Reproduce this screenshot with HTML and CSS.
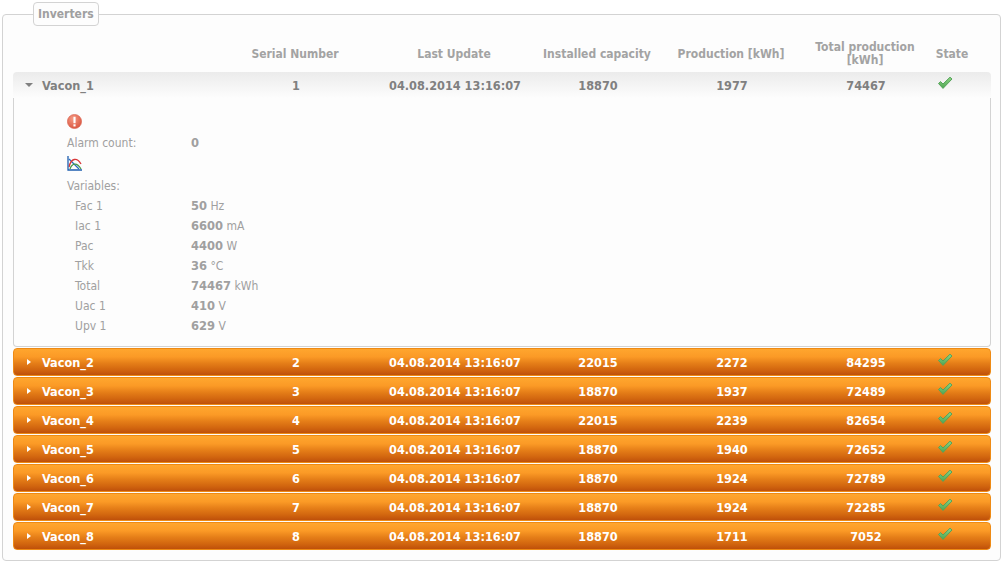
FILE: index.html
```html
<!DOCTYPE html>
<html lang="en">
<head>
<meta charset="utf-8">
<title>Inverters</title>
<link rel="stylesheet" href="styles.css">
</head>
<body>
<svg class="defs" width="0" height="0" aria-hidden="true">
  <defs>
    <linearGradient id="chk" x1="0" y1="0" x2="0" y2="1"><stop offset="0" stop-color="#8fd584"/><stop offset="1" stop-color="#4ea552"/></linearGradient>
    <symbol id="check" viewBox="0 0 16 14"><path d="M1.5 7.5 L3.6 5.6 L6 8 L13 1.2 L15 3 L6 12.4 Z" fill="url(#chk)" stroke="#55a35a" stroke-width="1"/></symbol>
  </defs>
</svg>
<fieldset class="panel">
  <legend class="panel-title">Inverters</legend>
  <div class="grid head">
    <span></span><span>Serial Number</span><span>Last Update</span><span>Installed capacity</span><span>Production [kWh]</span><span>Total production<br>[kWh]</span><span>State</span>
  </div>
  <div class="grid row open">
    <span class="name"><i class="tri down"></i>Vacon_1</span><span>1</span><span>04.08.2014 13:16:07</span><span>18870</span><span>1977</span><span>74467</span><span class="st"><svg class="check"><use href="#check"/></svg></span>
  </div>
  <div class="detail">
    <svg class="ico" viewBox="0 0 14 14"><defs><radialGradient id="al" cx=".4" cy=".3" r=".8"><stop offset="0" stop-color="#f59a84"/><stop offset="1" stop-color="#d8503a"/></radialGradient></defs><circle cx="7" cy="7" r="6.6" fill="url(#al)" stroke="#d9604c" stroke-width=".6"/><rect x="6" y="2.6" width="2" height="6" fill="#fff"/><rect x="6" y="9.6" width="2" height="2" fill="#fff"/></svg>
    <div class="kv alarm"><span>Alarm count:</span><b>0</b></div>
    <svg class="ico chart" viewBox="0 0 15 15"><path d="M2 3 L12 13" fill="none" stroke="#2a6fc0" stroke-width="1.3"/><path d="M3 13 C5 7 10 6 14 13" fill="none" stroke="#4a9a4a" stroke-width="1.3"/><path d="M2 11 C4 2 10 1 14 8" fill="none" stroke="#d9383a" stroke-width="1.3"/><path d="M1 0 V14 H15" fill="none" stroke="#1f5fb0" stroke-width="1.3"/></svg>
    <div class="vars-title">Variables:</div>
    <div class="kv var"><span>Fac 1</span><b>50</b> Hz</div>
    <div class="kv var"><span>Iac 1</span><b>6600</b> mA</div>
    <div class="kv var"><span>Pac</span><b>4400</b> W</div>
    <div class="kv var"><span>Tkk</span><b>36</b> °C</div>
    <div class="kv var"><span>Total</span><b>74467</b> kWh</div>
    <div class="kv var"><span>Uac 1</span><b>410</b> V</div>
    <div class="kv var"><span>Upv 1</span><b>629</b> V</div>
  </div>
  <div class="grid row"><span class="name"><i class="tri"></i>Vacon_2</span><span>2</span><span>04.08.2014 13:16:07</span><span>22015</span><span>2272</span><span>84295</span><span class="st"><svg class="check"><use href="#check"/></svg></span></div>
  <div class="grid row"><span class="name"><i class="tri"></i>Vacon_3</span><span>3</span><span>04.08.2014 13:16:07</span><span>18870</span><span>1937</span><span>72489</span><span class="st"><svg class="check"><use href="#check"/></svg></span></div>
  <div class="grid row"><span class="name"><i class="tri"></i>Vacon_4</span><span>4</span><span>04.08.2014 13:16:07</span><span>22015</span><span>2239</span><span>82654</span><span class="st"><svg class="check"><use href="#check"/></svg></span></div>
  <div class="grid row"><span class="name"><i class="tri"></i>Vacon_5</span><span>5</span><span>04.08.2014 13:16:07</span><span>18870</span><span>1940</span><span>72652</span><span class="st"><svg class="check"><use href="#check"/></svg></span></div>
  <div class="grid row"><span class="name"><i class="tri"></i>Vacon_6</span><span>6</span><span>04.08.2014 13:16:07</span><span>18870</span><span>1924</span><span>72789</span><span class="st"><svg class="check"><use href="#check"/></svg></span></div>
  <div class="grid row"><span class="name"><i class="tri"></i>Vacon_7</span><span>7</span><span>04.08.2014 13:16:07</span><span>18870</span><span>1924</span><span>72285</span><span class="st"><svg class="check"><use href="#check"/></svg></span></div>
  <div class="grid row"><span class="name"><i class="tri"></i>Vacon_8</span><span>8</span><span>04.08.2014 13:16:07</span><span>18870</span><span>1711</span><span>7052</span><span class="st"><svg class="check"><use href="#check"/></svg></span></div>
</fieldset>
</body>
</html>
```
FILE: styles.css
```css
html, body { margin: 0; padding: 0; background: #fff; }
body {
  padding: 2px 2px 0;
  font-family: "DejaVu Sans Condensed", "DejaVu Sans", sans-serif;
  font-stretch: condensed;
  font-size: 12px;
  color: #a0a0a0;
  overflow: hidden;
}
.defs { position: absolute; }
.panel {
  margin: 0;
  height: 559px;
  min-width: 0;
  width: 999px;
  box-sizing: border-box;
  border: 1px solid #d3d3d3;
  border-radius: 4px;
  padding: 18px 9px 0 10px;
  background: #fdfdfd;
}
.panel-title {
  margin: 0 0 -4px 20px;
  padding: 0 4px;
  height: 22px;
  line-height: 22px;
  border: 1px solid #d3d3d3;
  border-radius: 4px;
  font-weight: bold;
  font-size: 12px;
  background: #fdfdfd;
  color: #a0a0a0;
}
.grid {
  display: grid;
  grid-template-columns: 210px 144px 174px 112px 156px 112px 62px;
  padding-right: 8px;
  text-align: center;
  align-items: center;
  font-weight: bold;
  font-size: 12.6px;
}
.head {
  height: 32px;
  box-sizing: border-box;
  padding-bottom: 4px;
  font-size: 12px;
  line-height: 13px;
  color: #a3a3a3;
}
.row {
  height: 28px;
  margin-top: 1px;
  box-sizing: border-box;
  border: 1px solid #ee8a14;
  border-radius: 4px;
  color: #fff;
  background: linear-gradient(#ffa62e 0%, #fb9a26 30%, #e57e18 55%, #d2660f 80%, #bf500a 100%);
}
.row.open {
  height: 26px;
  margin-top: 0;
  border-color: transparent;
  border-width: 0 1px;
  border-radius: 4px 4px 0 0;
  background: linear-gradient(#ebebeb, #fdfdfd);
  color: #808080;
}
.name {
  display: flex;
  align-items: center;
  text-align: left;
  padding-left: 11px;
}
.tri {
  width: 0; height: 0;
  margin-right: 11px;
  margin-left: 2px;
  border-style: solid;
  border-width: 3.5px 0 3.5px 4px;
  border-color: transparent transparent transparent #fff;
}
.tri.down {
  margin-left: 0;
  margin-right: 9px;
  border-width: 4px 4px 0;
  border-color: #808080 transparent transparent;
}
.st { display: flex; justify-content: flex-start; padding-left: 15px; }
.check { width: 16px; height: 14px; margin-top: -5px; }
.detail {
  height: 249px;
  box-sizing: border-box;
  border: 1px solid #d3d3d3;
  border-top: 0;
  border-radius: 0 0 4px 4px;
  padding: 16px 0 0 53px;
  background: #fdfdfd;
}
.ico { display: block; width: 15px; height: 15px; }
.chart { margin-top: 5px; }
.kv { display: flex; align-items: baseline; height: 20px; line-height: 20px; white-space: pre; }
.kv span { width: 124px; flex: none; font-weight: normal; }
.kv b { font-size: 12.8px; }
.alarm { margin-top: 5px; height: 17px; line-height: 17px; }
.vars-title { height: 20px; line-height: 20px; margin-top: 5px; }
.var { padding-left: 8px; }
.var span { width: 116px; }
```
